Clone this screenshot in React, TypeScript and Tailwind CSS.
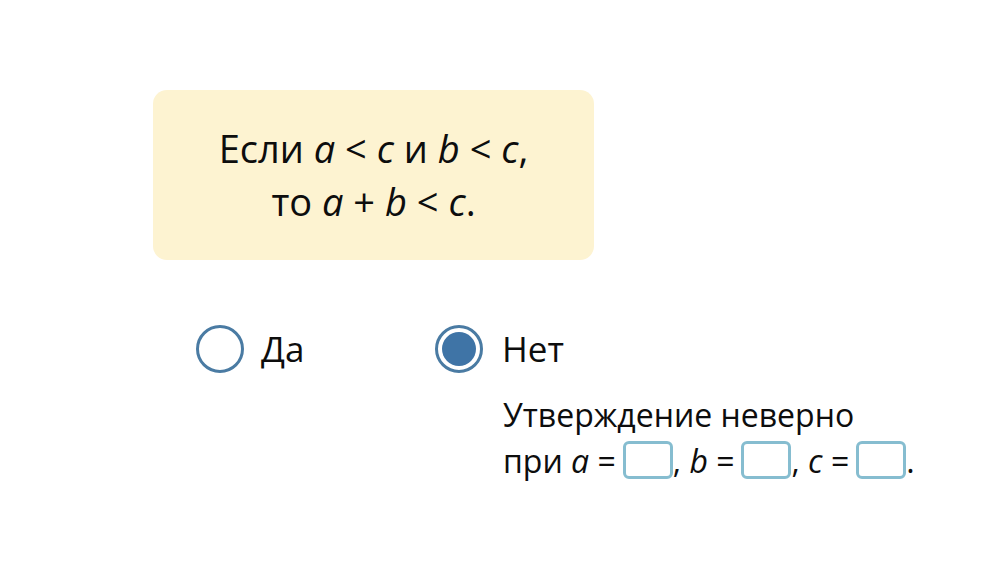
const font = { fontFamily: '"Open Sans", "Noto Sans", sans-serif' };

function Radio({ checked }: { checked?: boolean }) {
  return (
    <span className="flex h-[48px] w-[48px] shrink-0 items-center justify-center rounded-full border-[3px] border-[#4a7ba3] bg-white">
      {checked && <span className="h-[34px] w-[34px] rounded-full bg-[#3f74a6]" />}
    </span>
  );
}

function Blank() {
  return (
    <span className="ml-[7px] inline-block h-[38px] w-[50px] translate-y-[6px] rounded-[6px] border-[3px] border-[#86bdd0] bg-white align-baseline" />
  );
}

export default function App() {
  return (
    <div className="h-[566px] w-[1007px] bg-white text-[#0d0d0d]" style={font}>
      <div className="pl-[153px] pt-[90px]">
        <div className="flex h-[170px] w-[441px] flex-col items-center justify-center rounded-[14px] bg-[#fdf3d1] text-[38px] leading-[53px]">
          <p>
            Если <i>a</i> &lt; <i>c</i> и <i>b</i> &lt; <i>c</i>,
          </p>
          <p>
            то <i>a</i> + <i>b</i> &lt; <i>c</i>.
          </p>
        </div>
      </div>
      <div className="mt-[63px] flex items-start pl-[196px] text-[35px]">
        <label className="flex w-[239px] items-center gap-[17px]">
          <Radio />
          <span>Да</span>
        </label>
        <div className="flex flex-col">
          <label className="flex items-center gap-[19px]">
            <Radio checked />
            <span>Нет</span>
          </label>
          <div className="ml-[68px] mt-[18px] text-[32px] leading-[41px]">
            <p>Утверждение неверно</p>
            <p>
              при <i>a</i> =<Blank />, <i>b</i> =<Blank />, <i>c</i> =<Blank />.
            </p>
          </div>
        </div>
      </div>
    </div>
  );
}
